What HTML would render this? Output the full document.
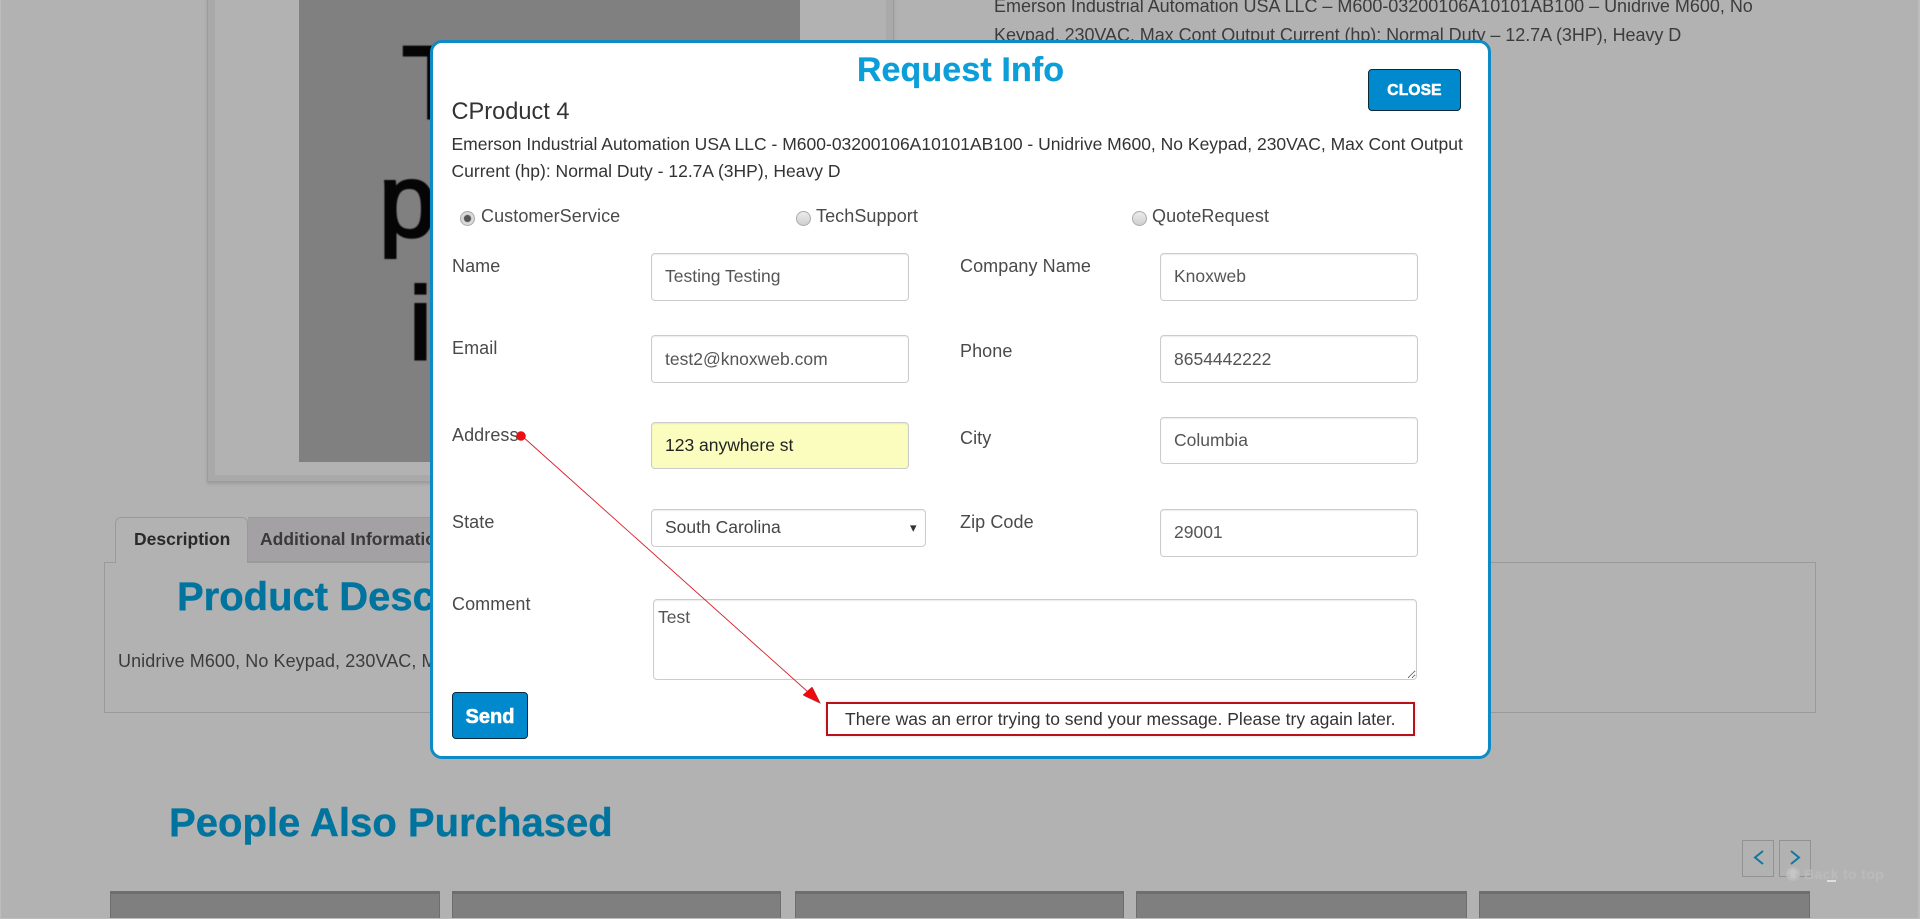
<!DOCTYPE html>
<html lang="en">
<head>
<meta charset="utf-8">
<title>Request Info</title>
<style>
*{box-sizing:border-box}
html,body{margin:0;padding:0;width:1920px;height:919px;overflow:hidden;background:#b2b2b2}
body{position:relative;font-family:"Liberation Sans",Arial,sans-serif;color:#333}
.a{position:absolute;white-space:nowrap}
.bg{color:#3c3c3c;font-size:18px;line-height:24px}
.h{color:#00749e;font-weight:700;font-size:40px;line-height:50px;-webkit-text-stroke:.4px #00749e}
.big{font-size:103px;line-height:118px;color:#050505;-webkit-text-stroke:3px #050505;filter:blur(.6px)}
.card{position:absolute;top:891px;height:40px;background:#7f7f7f;border:1px solid #6e6e6e;border-top:3px solid #6e6e6e}
#modal{position:absolute;left:430px;top:40px;width:1061px;height:719px;background:#fff;border:3px solid #0e8ac6;border-radius:12px}
.l{position:absolute;white-space:nowrap;font-size:18px;line-height:24px;color:#4a4a4a;letter-spacing:.08px}
.t{position:absolute;white-space:nowrap;font-size:17.5px;color:#333}
input.f,select.f,textarea.f{position:absolute;margin:0;background:#fff;border:1px solid #ccc;border-radius:4px;box-shadow:inset 0 1px 1px rgba(0,0,0,.075);font-family:"Liberation Sans",Arial,sans-serif;font-size:17.5px;color:#555;padding:0 13px;outline:none}
select.f{appearance:none;-webkit-appearance:none;color:#444;padding-bottom:2px}
textarea.f{padding:6px 4px;line-height:22px;resize:both}
input.r{position:absolute;margin:0;width:15px;height:15px;appearance:none;-webkit-appearance:none;border-radius:50%;border:1px solid #aaa;background:linear-gradient(#ececec,#cfcfcf)}
input.r:checked{background:radial-gradient(circle,#555 0,#555 3.2px,#d8d8d8 4px,#dcdcdc 100%)}
.btn{position:absolute;margin:0;padding:0;background:#0089cc;border:1px solid #0a2a3a;border-radius:4px;color:#fff;font-family:"Liberation Sans",Arial,sans-serif;font-weight:700;-webkit-text-stroke:.6px #fff;text-align:center}
</style>
</head>
<body>
<!-- dimmed page -->
<div class="a" style="left:207px;top:-10px;width:687px;height:492px;background:#a9a9a9;border:1px solid #9c9c9c;border-top:0;box-shadow:0 2px 3px rgba(0,0,0,.12)"></div>
<div class="a" style="left:215px;top:-10px;width:671px;height:485px;background:#b2b2b2"></div>
<div class="a" style="left:299px;top:-10px;width:501px;height:472px;background:#808080"></div>
<div class="a big" style="left:402px;top:24px">T</div>
<div class="a big" style="left:379px;top:142px">p</div>
<div class="a big" style="left:409px;top:265px">i</div>

<div class="a bg" style="left:994px;top:-6px;letter-spacing:-.02px">Emerson Industrial Automation USA LLC – M600-03200106A10101AB100 – Unidrive M600, No</div>
<div class="a bg" style="left:994px;top:23px;letter-spacing:-.06px">Keypad, 230VAC, Max Cont Output Current (hp): Normal Duty – 12.7A (3HP), Heavy D</div>

<div class="a" style="left:104px;top:562px;width:1712px;height:151px;border:1px solid #9a9a9a"></div>
<div class="a" style="left:115px;top:517px;width:133px;height:46px;background:#b2b2b2;border:1px solid #9a9a9a;border-bottom:0;border-radius:6px 6px 0 0"></div>
<div class="a" style="left:248px;top:517px;width:190px;height:45px;background:#a3a1a3;border:1px solid #9a9a9a;border-left:0;border-radius:0 6px 0 0"></div>
<div class="a" style="left:134px;top:527px;font-size:17.5px;line-height:24px;font-weight:700;color:#2a2a2a">Description</div>
<div class="a" style="left:260px;top:527px;font-size:17.5px;line-height:24px;font-weight:700;color:#3a3a3a">Additional Information</div>
<div class="a h" style="left:177px;top:572px">Product Description</div>
<div class="a bg" style="left:118px;top:649px;letter-spacing:.08px">Unidrive M600, No Keypad, 230VAC, Max Cont Output</div>
<div class="a h" style="left:169px;top:798px;letter-spacing:.03px">People Also Purchased</div>

<div class="card" style="left:110px;width:330px"></div>
<div class="card" style="left:452px;width:329px"></div>
<div class="card" style="left:795px;width:329px"></div>
<div class="card" style="left:1136px;width:331px"></div>
<div class="card" style="left:1479px;width:331px"></div>

<div class="a" style="left:1742px;top:840px;width:32px;height:37px;border:1px solid #929292"></div>
<div class="a" style="left:1779px;top:840px;width:32px;height:37px;border:1px solid #929292"></div>
<svg class="a" style="left:1742px;top:840px" width="70" height="37" viewBox="0 0 70 37" fill="none" stroke="#14779c" stroke-width="2"><path d="M21 11L13 17.5L21 24"/><path d="M49 11L57 17.5L49 24"/></svg>
<svg class="a" style="left:1784px;top:865px;filter:blur(.5px)" width="18" height="18" viewBox="0 0 18 18"><circle cx="9" cy="9" r="7" fill="#bcbcbc"/><path d="M9 3l5.500 5.500h-3v4.500H6.500V8.500h-3z" fill="#c6c6c6"/></svg>
<div class="a" style="left:1804px;top:864px;font-size:14px;line-height:20px;font-weight:700;color:#bcbcbc;letter-spacing:.35px;filter:blur(.5px)">Back to top</div>
<div class="a" style="left:1827px;top:880px;width:9px;height:2px;background:#dedede"></div>
<div class="a" style="left:0;top:0;width:1px;height:919px;background:#bdbdbd"></div>
<div class="a" style="left:1918px;top:0;width:2px;height:919px;background:#bdbdbd"></div>
<div class="a" style="left:0;top:918px;width:1920px;height:1px;background:#bdbdbd"></div>

<!-- modal (inner coords: subtract 433, 43) -->
<div id="modal">
  <div class="a" style="left:0;width:1055px;text-align:center;top:7px;font-size:34px;line-height:40px;font-weight:700;color:#0b9ed9;letter-spacing:.12px;-webkit-text-stroke:.3px #0b9ed9">Request Info</div>
  <button class="btn" style="left:935px;top:26px;width:93px;height:42px;font-size:15.5px;letter-spacing:.2px;padding-top:2px">CLOSE</button>
  <div class="t" style="left:18.500px;top:55px;font-size:23.6px;line-height:28px;color:#333">CProduct 4</div>
  <div class="t" style="left:18.500px;top:88px;line-height:27px;width:1020px;white-space:normal">Emerson Industrial Automation USA LLC - M600-03200106A10101AB100 - Unidrive M600, No Keypad, 230VAC, Max Cont Output Current (hp): Normal Duty - 12.7A (3HP), Heavy D</div>

  <input class="r" type="radio" name="k" checked style="left:27px;top:168px">
  <div class="l" style="left:48px;top:161px">CustomerService</div>
  <input class="r" type="radio" name="k" style="left:363px;top:168px">
  <div class="l" style="left:383px;top:161px">TechSupport</div>
  <input class="r" type="radio" name="k" style="left:699px;top:168px">
  <div class="l" style="left:719px;top:161px">QuoteRequest</div>

  <div class="l" style="left:19px;top:211px">Name</div>
  <input class="f" value="Testing Testing" style="left:218px;top:210px;width:258px;height:48px;padding-bottom:1px">
  <div class="l" style="left:527px;top:211px">Company Name</div>
  <input class="f" value="Knoxweb" style="left:727px;top:210px;width:258px;height:48px;padding-bottom:1px">

  <div class="l" style="left:19px;top:293px">Email</div>
  <input class="f" value="test2@knoxweb.com" style="left:218px;top:292px;width:258px;height:48px">
  <div class="l" style="left:527px;top:296px">Phone</div>
  <input class="f" value="8654442222" style="left:727px;top:292px;width:258px;height:48px">

  <div class="l" style="left:19px;top:380px">Address</div>
  <input class="f" value="123 anywhere st" style="left:218px;top:379px;width:258px;height:47px;background:#fbfdbf;color:#222">
  <div class="l" style="left:527px;top:383px">City</div>
  <input class="f" value="Columbia" style="left:727px;top:374px;width:258px;height:47px;padding-bottom:1px">

  <div class="l" style="left:19px;top:467px">State</div>
  <select class="f" style="left:218px;top:466px;width:275px;height:38px"><option>South Carolina</option></select>
  <div class="a" style="left:477px;top:476px;font-size:13px;line-height:18px;color:#333">▾</div>
  <div class="l" style="left:527px;top:467px">Zip Code</div>
  <input class="f" value="29001" style="left:727px;top:466px;width:258px;height:48px;padding-bottom:2px">

  <div class="l" style="left:19px;top:549px">Comment</div>
  <textarea class="f" style="left:220px;top:556px;width:764px;height:81px">Test</textarea>

  <button class="btn" style="left:19px;top:649px;width:76px;height:47px;font-size:20px;padding-top:3px">Send</button>
  <div class="a" style="left:393px;top:659px;width:589px;height:34px;border:2px solid #b5121b;box-shadow:0 0 3px rgba(0,0,0,.15)"></div>
  <div class="t" style="left:412px;top:664px;line-height:24px;color:#333">There was an error trying to send your message. Please try again later.</div>
</div>

<svg class="a" style="left:0;top:0;pointer-events:none" width="1920" height="919" viewBox="0 0 1920 919">
  <path d="M522 436L808 692" stroke="#d8202a" stroke-width=".9" fill="none"/>
  <circle cx="521" cy="436" r="4.5" fill="#ee0d12" stroke="#c01010" stroke-width=".5"/>
  <path d="M820 703L812 687L803 695Z" fill="#000" opacity=".25" transform="translate(1.500 1.500)"/>
  <path d="M820 703L812 687L803 695Z" fill="#ee0a0f" stroke="#c01010" stroke-width=".5"/>
</svg>
</body>
</html>
